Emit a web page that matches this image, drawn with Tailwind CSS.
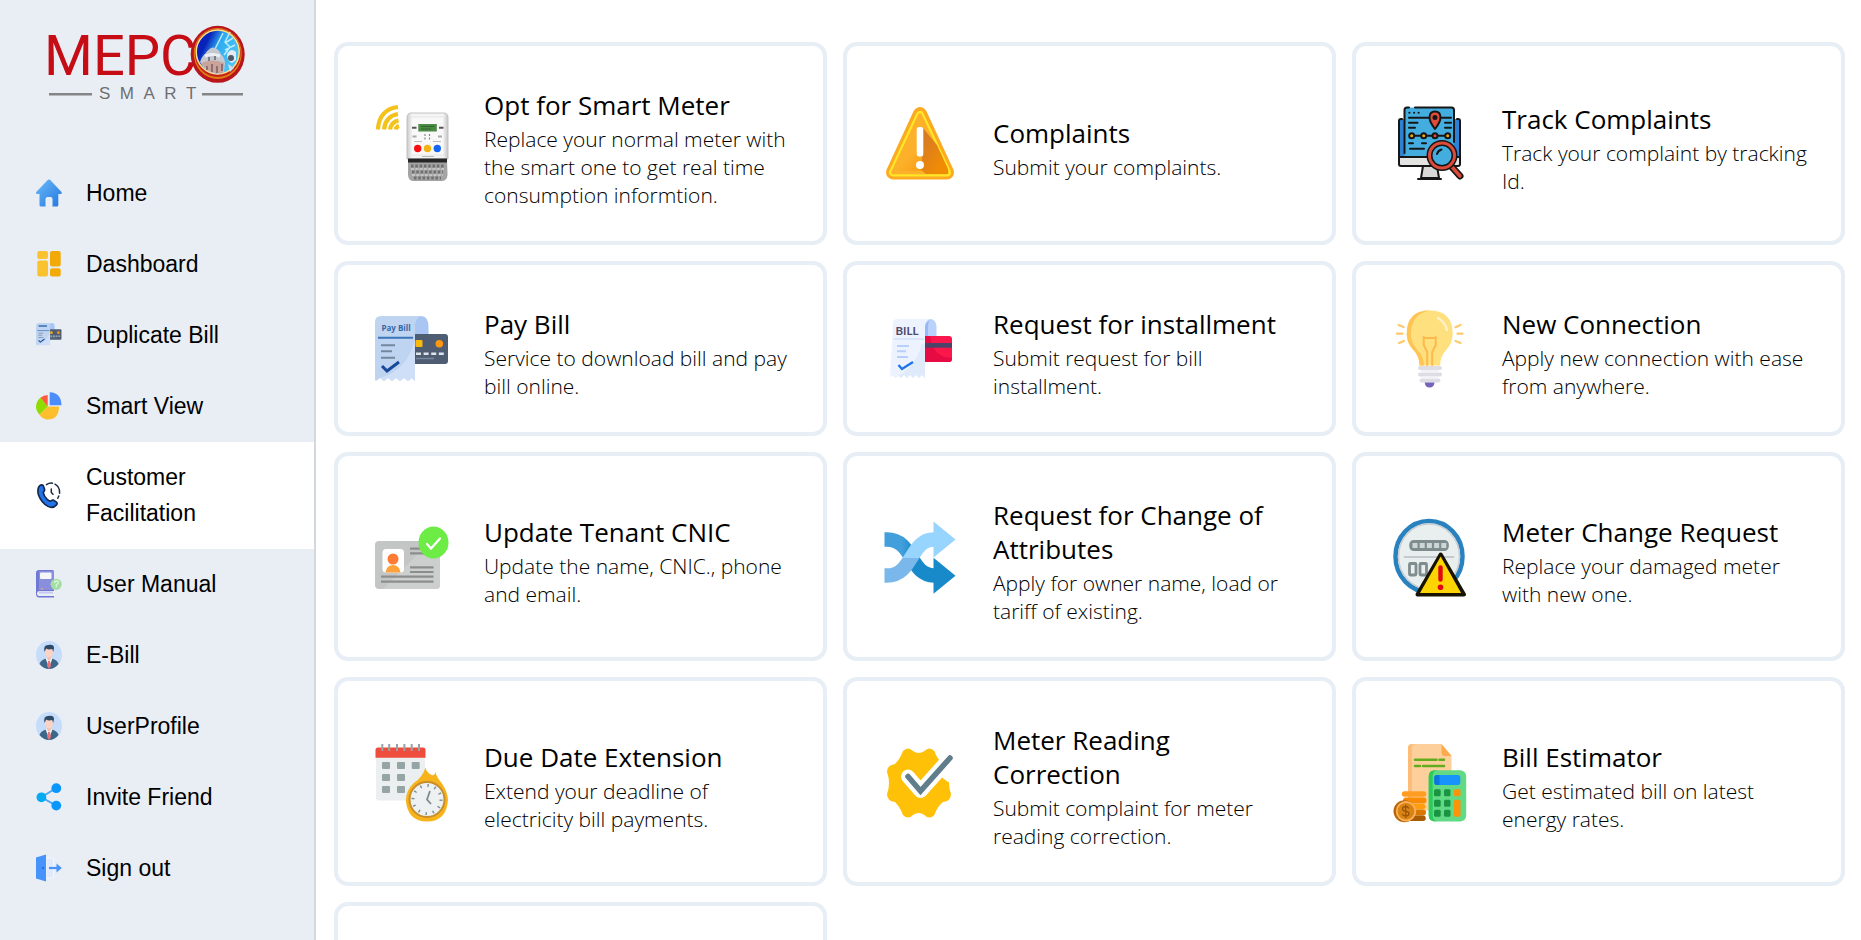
<!DOCTYPE html>
<html lang="en">
<head>
<meta charset="utf-8">
<meta name="viewport" content="width=device-width, initial-scale=1">
<title>MEPCO Smart</title>
<script src="https://cdn.jsdelivr.net/npm/@tailwindcss/browser@4"></script>
</head>
<body class="bg-white text-black">
<svg class="hidden" aria-hidden="true">
  <symbol id="paybill" viewBox="0 0 74 78">
    <path d="M34 6h12q7 0 7.500 10v12H40z" fill="#a8c5f3"/>
    <path d="M46 6q-6 1-6 10v12h-3V6z" fill="#90b2ee"/>
    <rect x="36" y="24" width="37" height="30" rx="3" fill="#4f5d73"/>
    <path d="M0 12q0-6 6-6h40q-6 2-6 12v53l-3-3-4 3-4-3-4 3-4-3-4 3-4-3-4 3-4-3-4 3-3-3-2 3z" fill="#bfd4f1"/>
    <path d="M40 29v42l-3-3-4 3-4-3-4 3-4-3-4 3-4-3-4 3-4-3q28-8 35-39z" fill="#cfdff8"/>
    <path d="M3 27.700h35" stroke="#3b74b9" stroke-width="2"/>
    <path d="M6 35.300h14M6 41.300h11M6 47.700h14" stroke="#76869f" stroke-width="2"/>
    <path d="M7 56l5 5 12-9" stroke="#174a9b" stroke-width="3" fill="none"/>
    <rect x="40.500" y="30" width="7" height="7" rx="1" fill="#fbb909"/>
    <circle cx="64.300" cy="33.700" r="3.800" fill="#ff9811"/>
    <path d="M41 43.700h28" stroke="#dfe4ea" stroke-width="2.500" stroke-dasharray="5 2.600"/>
    <path d="M41 48.500h18" stroke="#7a869b" stroke-width="1.500"/>
  </symbol>
  <symbol id="avatar" viewBox="0 0 26 28">
    <ellipse cx="13" cy="14" rx="13" ry="14" fill="#c5dcfb"/>
    <path d="M3.500 23q1-4 6.500-5.500h6q5.500 1.500 6.500 5.500-4 5-9.500 5t-9.500-5z" fill="#3d6788"/>
    <path d="M9.500 17l3.500 10 3.500-10z" fill="#f5f7fa"/>
    <path d="M12 20h2l1 5-2 3-2-3z" fill="#e8747c"/>
    <path d="M11 13h4v5l-2 2-2-2z" fill="#f5bfae"/>
    <ellipse cx="13" cy="11" rx="4" ry="5.500" fill="#fbd3c4"/>
    <path d="M8.500 11Q7 4 12 4q6-1 6 3l-.8 4-1-3q-4 1-6-.5z" fill="#2d4b66"/>
  </symbol>
</svg>

<div class="flex h-screen overflow-hidden">
  <aside class="w-[316px] shrink-0 border-r-2 border-[#d3d8df] bg-[#e9eef5] font-['Liberation_Sans',Arial,sans-serif]">
    <a href="#" class="block pt-[25px] pl-[49px]">
      <svg class="block overflow-visible" width="196" height="75" viewBox="0 0 196 75" role="img" aria-label="MEPCO Smart">
        <defs>
          <linearGradient id="sky" x1="0" x2="1" y1="0" y2=".5"><stop offset=".3" stop-color="#0822bb"/><stop offset=".55" stop-color="#2eaaf0"/><stop offset="1" stop-color="#4cc6f6"/></linearGradient>
        </defs>
        <text x="-5" y="50" font-family="Roboto, Liberation Sans, sans-serif" font-size="56" fill="#c60c14">MEPC</text>
        <ellipse cx="168.700" cy="29.300" rx="27" ry="28.500" fill="#b9151c"/>
        <ellipse cx="168.700" cy="28.500" rx="24" ry="25.500" fill="#e2810f"/>
        <ellipse cx="168.700" cy="28" rx="23" ry="24" fill="#c4231b"/>
        <ellipse cx="168.700" cy="27" rx="21.500" ry="22" fill="url(#sky)" stroke="#ffe08a" stroke-width="1.500"/>
        <path d="M174 8l-8 16M181 7l-5 10 5 5-6 8M184 13l-8 5M186 20l-10 5" stroke="#b9ecff" stroke-width="1.500" fill="none"/>
        <path d="M151 37q2-6 5-8 4-6 8-6.500 6 1 8 7 3 2 4 8l-1 10-6 2q-12-1-18-12.500z" fill="#c6c8cf"/>
        <path d="M156 31q7-3 15 0" stroke="#edf0f3" stroke-width="3" fill="none"/>
        <path d="M152 38q12-5 23 0l-1 10q-14 2-22-10z" fill="#caa49b"/>
        <path d="M158 41v4M163 39v8M168 41v7M173 39v7" stroke="#8f6e75" stroke-width="2"/>
        <path d="M160 32v4M166 31v4" stroke="#777d8f" stroke-width="2"/>
        <path d="M178 29q4-7 9-2v8l-4 3q-5-2-5-9z" fill="#e3eaf0"/>
        <ellipse cx="182" cy="33" rx="3" ry="3" fill="#4d5965"/>
        <path d="M179 39l6 4-4 4z" fill="#d5dde6"/>
        <path d="M0 69.300h43M153 69.300h41" stroke="#858585" stroke-width="2.500"/>
        <text x="50" y="74" font-family="Liberation Sans, Arial, sans-serif" font-size="17" fill="#6f6f6f">S&#160;&#160;M&#160;&#160;A&#160;&#160;R&#160;&#160;T</text>
      </svg>
    </a>
    <nav class="pt-[58px] text-[23px] leading-9" aria-label="Main">
      <a href="#" class="flex items-center gap-6 pt-[17px] pr-8 pb-[18px] pl-9">
        <svg class="h-7 w-[26px] shrink-0" viewBox="0 0 26 28" aria-hidden="true"><defs><linearGradient id="hg" x1="0" y1="0" x2="1" y2="1"><stop stop-color="#6cbcf9"/><stop offset="1" stop-color="#2176e0"/></linearGradient></defs><path d="M12 .8q1-.8 2 0L25.500 13q.8 2-1 2h-2.200v11q0 1.500-1.500 1.500h-4.300V20q0-2-2-2h-3q-2 0-2 2v7.500H5q-1.500 0-1.500-1.500V15H1.200q-1.800 0-1-2z" fill="url(#hg)"/></svg>
        <span>Home</span></a>
      <a href="#" class="flex items-center gap-6 pt-[17px] pr-8 pb-[18px] pl-9">
        <svg class="h-7 w-[26px] shrink-0" viewBox="0 0 26 28" aria-hidden="true"><g fill="#f9c22e"><rect x="1.300" y="1" width="10.700" height="8" rx="2"/><rect x="1.300" y="10.500" width="10.700" height="16" rx="2"/></g><g fill="#f2aa08"><rect x="14" y="1" width="10.700" height="15.500" rx="2"/><rect x="14" y="18.300" width="10.700" height="8.200" rx="2"/></g></svg>
        <span>Dashboard</span></a>
      <a href="#" class="flex items-center gap-6 pt-[17px] pr-8 pb-[18px] pl-9">
        <svg class="h-7 w-[26px] shrink-0" viewBox="0 0 26 28" aria-hidden="true"><use href="#paybill" width="26" height="27"/><path d="M2.500 5h8.500" stroke="#5b86c4" stroke-width="2"/></svg>
        <span>Duplicate Bill</span></a>
      <a href="#" class="flex items-center gap-6 pt-[17px] pr-8 pb-[18px] pl-9">
        <svg class="h-7 w-[26px] shrink-0" viewBox="0 0 26 28" aria-hidden="true"><path d="M11.700 14.500L3.600 22.700Q0 18.500 0 15q0-5.500 4.500-9.500z" fill="#90dc00"/><path d="M11.700 14.500L4.500 5.700Q7.500 3.200 11.700 3z" fill="#fd5a3e"/><path d="M11.700 14.500H23q0 13-11.300 13-5 0-8.200-4.800z" fill="#fdbf2d"/><path d="M13.700 13.300V.3q11.500.5 11.800 13z" fill="#4d8dfb"/></svg>
        <span>Smart View</span></a>
      <a href="#" aria-current="page" class="flex items-center gap-6 bg-white pt-[17px] pr-8 pb-[18px] pl-9">
        <svg class="h-7 w-[26px] shrink-0" viewBox="0 0 26 28" fill="none" stroke-linecap="round" stroke-linejoin="round" aria-hidden="true"><path d="M3 5.500Q5 3 7.200 4.500L8.500 8q.6 1.800-1.300 3.300.5 3.500 4 7 2 1.500 3.300 2 1.500-1.700 3-1.200l3 2q1.200 1.300 0 2.800-3.500 4-8.500 1.500Q5.500 22 2.500 14 1 8.500 3 5.500z" fill="#2173e8" stroke="#122447" stroke-width="1.600"/><path d="M10.500 3.600q3-2 6-1.400M19 3.200q5 2.800 4.600 9M22.800 15l-1 2.200" stroke="#1c2a44" stroke-width="1.500"/><path d="M15.300 8v3.500l1.700 1.700" stroke="#1c2a44" stroke-width="1.500"/></svg>
        <span>Customer Facilitation</span></a>
      <a href="#" class="flex items-center gap-6 pt-[17px] pr-8 pb-[18px] pl-9">
        <svg class="h-7 w-[26px] shrink-0" viewBox="0 0 26 28" aria-hidden="true"><path d="M3 0h13.500q1.500 0 1.500 1.500V21H3q-2 0-2 2.500T3 26h15v1.500H3q-3 0-3-4V3q0-3 3-3z" fill="#7079d2"/><path d="M3 1h15v19H3z" fill="#8a8fdd"/><rect x="4" y="2.500" width="11.500" height="6.500" rx="1" fill="#f5f5fc"/><path d="M3 22.500h14" stroke="#c5c8f2" stroke-width="2"/><path d="M4.500 19.500l1.500-2 1.500 2z" fill="#e8a77a"/><circle cx="20.200" cy="14.300" r="5.600" fill="#a3dfa4"/><path d="M18.500 13q0-2 2-2t1.800 1.800q-.3 1.200-2 1.700v3" stroke="#d9f5d5" stroke-width="1.300" fill="none"/></svg>
        <span>User Manual</span></a>
      <a href="#" class="flex items-center gap-6 pt-[17px] pr-8 pb-[18px] pl-9">
        <svg class="h-7 w-[26px] shrink-0" viewBox="0 0 26 28" aria-hidden="true"><use href="#avatar"/></svg>
        <span>E-Bill</span></a>
      <a href="#" class="flex items-center gap-6 pt-[17px] pr-8 pb-[18px] pl-9">
        <svg class="h-7 w-[26px] shrink-0" viewBox="0 0 26 28" aria-hidden="true"><use href="#avatar"/></svg>
        <span>UserProfile</span></a>
      <a href="#" class="flex items-center gap-6 pt-[17px] pr-8 pb-[18px] pl-9">
        <svg class="h-7 w-[26px] shrink-0" viewBox="0 0 26 28" aria-hidden="true"><path d="M20.300 5L5.300 14.300l15 8.300" stroke="#4aa5f8" stroke-width="1.800" fill="none"/><circle cx="20.300" cy="5.200" r="4.900" fill="#0a97fc"/><circle cx="5.400" cy="14.300" r="4.900" fill="#04abf3"/><circle cx="20.300" cy="22.600" r="4.900" fill="#0a97fc"/></svg>
        <span>Invite Friend</span></a>
      <a href="#" class="flex items-center gap-6 pt-[17px] pr-8 pb-[18px] pl-9">
        <svg class="h-7 w-[26px] shrink-0" viewBox="0 0 26 28" aria-hidden="true"><path d="M10 4h7.500v20H10z" fill="#e2e9fb" stroke="#f1f5ff"/><path d="M0 3.500L10 .5v27l-10-3z" fill="#4593fb"/><circle cx="7" cy="14" r="1.200" fill="#2c6fe0"/><path d="M13 14h9" stroke="#4593fb" stroke-width="2.200"/><path d="M20.500 9.500L25.800 14l-5.300 4.500z" fill="#4593fb"/></svg>
        <span>Sign out</span></a>
    </nav>
  </aside>

  <main class="min-w-0 flex-1 overflow-hidden pt-[42px] pr-4 pl-[18px] font-['Open_Sans','Noto_Sans',sans-serif]">
    <div class="grid grid-cols-3 gap-4">

      <a href="#" class="flex items-center gap-[35px] rounded-[14px] border-4 border-[#e8eef5] py-8 pr-7 pl-[37px]">
        <svg class="h-[78px] w-[74px] shrink-0 overflow-visible" viewBox="0 0 74 78" aria-hidden="true">
          <defs><linearGradient id="mt" x1="0" x2="1"><stop stop-color="#c9c9c9"/><stop offset=".12" stop-color="#f4f4f4"/><stop offset=".88" stop-color="#f4f4f4"/><stop offset="1" stop-color="#c4c4c4"/></linearGradient></defs>
          <g fill="none" stroke="#f3c21b" stroke-width="4.200"><path d="M2.800 24.500Q4.500 4 23 2"/><path d="M9 24.500Q10.500 11 23 9"/><path d="M15 24.500Q16 17 23.500 15.500"/><path d="M20.800 24.500Q21 22 24 21"/></g>
          <path d="M36 8h33q4 0 4 5v41H32V13q0-5 4-5z" fill="url(#mt)" stroke="#c2c2c2"/>
          <path d="M36 12h33v38H36z" fill="#f8f8f8" stroke="#e2e2e2" stroke-width=".8"/>
          <path d="M33 54h39l.5 16q-.5 6-6 6h-28q-5 0-5.500-6z" fill="#a4a4a4"/>
          <path d="M33 53.500h39v4H33z" fill="#262626"/>
          <path d="M36 61h33M37 67h31M39 73h27" stroke="#707070" stroke-width="3" stroke-dasharray="2.500 1.800"/>
          <path d="M36 64h33M37 70h31" stroke="#cfcfcf" stroke-width="1.300" stroke-dasharray="3 1.300"/>
          <rect x="43.300" y="19" width="18.500" height="7.500" fill="#4a8a43"/><path d="M46 21.500h13M46 24h10" stroke="#2f6330"/>
          <path d="M37 22.700h4.500M64 22.700h4.500" stroke="#555" stroke-width="2"/><path d="M37.500 31.500h4M63 31.500h4" stroke="#a9a9a9" stroke-width="2"/>
          <path d="M50 29v7M54.500 29v7" stroke="#888" stroke-width="1.200" stroke-dasharray="2 1.500"/><path d="M39 36.500h8M58 36.500h8M47 51.500h12" stroke="#bbb"/>
          <circle cx="42.700" cy="43.500" r="3.700" fill="#f80e12"/><circle cx="52.500" cy="43.500" r="3.700" fill="#f3b312"/><circle cx="62.300" cy="43.500" r="3.700" fill="#1466f2"/>
        </svg>
        <div class="min-w-0 pt-[10px]"><h2 class="mb-[3px] text-[26px] leading-[34px]">Opt for Smart Meter</h2><p class="text-[21px] leading-7 font-light">Replace your normal meter with the smart one to get real time consumption informtion.</p></div>
      </a>

      <a href="#" class="flex items-center gap-[35px] rounded-[14px] border-4 border-[#e8eef5] py-8 pr-7 pl-[37px]">
        <svg class="h-[78px] w-[74px] shrink-0 overflow-visible" viewBox="0 0 74 78" aria-hidden="true">
          <defs><linearGradient id="wg" x1="0" x2="1" y1="0" y2="1"><stop stop-color="#ffb52e"/><stop offset=".5" stop-color="#fdb02a"/><stop offset="1" stop-color="#f38e00"/></linearGradient><linearGradient id="ws" x1="0" x2="1" y1="0" y2="1"><stop stop-color="#cf7431"/><stop offset=".8" stop-color="#f08c03"/></linearGradient></defs>
          <path d="M36 9L9 67.500h54z" fill="#fbaa21" stroke="#fbaa21" stroke-width="14" stroke-linejoin="round"/>
          <path d="M36 10L9 67.500h54z" fill="url(#wg)" stroke="#ffe627" stroke-width="8" stroke-linejoin="round"/>
          <path d="M36 10L9 67.500h54z" fill="url(#wg)" stroke="#fdb02a" stroke-width="3.500" stroke-linejoin="round"/>
          <path d="M39 23L53 40l11 24v5H42l-8-7 4-5z" fill="url(#ws)"/>
          <rect x="32.700" y="22" width="6.600" height="29.500" rx="2.500" fill="#fff"/><circle cx="36" cy="60" r="4" fill="#fff"/>
        </svg>
        <div class="min-w-0 pt-[10px]"><h2 class="mb-[3px] text-[26px] leading-[34px]">Complaints</h2><p class="text-[21px] leading-7 font-light">Submit your complaints.</p></div>
      </a>

      <a href="#" class="flex items-center gap-[35px] rounded-[14px] border-4 border-[#e8eef5] py-8 pr-7 pl-[37px]">
        <svg class="h-[78px] w-[74px] shrink-0 overflow-visible" viewBox="0 0 74 78" fill="none" stroke="#161616" stroke-width="2" stroke-linecap="round" stroke-linejoin="round" aria-hidden="true">
          <path d="M9 14h-1q-2 0-2 2v36h61V16q0-2-2-2h-1" fill="#2d82d8"/>
          <path d="M6 52h61v7q0 2-2 2H8q-2 0-2-2z" fill="#e4e4e2"/>
          <path d="M30 61h14l2 12H28z" fill="#d9d9d7"/><path d="M25 74h23"/>
          <path d="M11.500 52V5q0-2.500 2.500-2.500h44.500Q61 2.500 61 5v47z" fill="#44ade0" stroke="none"/>
          <path d="M11.500 48V5q0-2.500 2.500-2.500h2M22 2.500h36.500Q61 2.500 61 5v32"/><path d="M7 52h30"/>
          <path d="M16.300 7.800h.2M21 7.800h.2M25.500 7.800h.2M16 12.800h42M16 17.800h8.500M16 22.800h6M52 17.800h6M52 22.800h6M16 38.200h4M29 38.200h4M17 43.800h14M19 30.800h36"/>
          <path d="M42 24q-5.500-7-5.500-11.500 0-6 5.500-6t5.500 6Q47.500 17 42 24z" fill="#e24a3b"/><circle cx="42" cy="12.500" r="1.500" fill="#161616"/>
          <g fill="#f0a70c"><circle cx="18.700" cy="30.800" r="2.500"/><circle cx="30.700" cy="30.800" r="2.500"/><circle cx="54.700" cy="30.800" r="2.500"/></g><circle cx="42" cy="30.800" r="2.500" fill="#e24a3b"/>
          <path d="M58 61l9 10" stroke-width="7"/><path d="M59 62l8 9" stroke="#dc4a38" stroke-width="3.500"/>
          <circle cx="49" cy="50.500" r="12.500" fill="#44ade0" stroke-width="6"/><circle cx="49" cy="50.500" r="12.500" stroke="#dc4a38" stroke-width="3"/><path d="M44 49q1-3.500 4.500-4.500"/>
        </svg>
        <div class="min-w-0 pt-[10px]"><h2 class="mb-[3px] text-[26px] leading-[34px]">Track Complaints</h2><p class="text-[21px] leading-7 font-light">Track your complaint by tracking Id.</p></div>
      </a>

      <a href="#" class="flex items-center gap-[35px] rounded-[14px] border-4 border-[#e8eef5] py-8 pr-7 pl-[37px]">
        <svg class="h-[78px] w-[74px] shrink-0 overflow-visible" viewBox="0 0 74 78" aria-hidden="true"><use href="#paybill"/><text x="6.500" y="20.500" font-family="Open Sans, sans-serif" font-size="8" font-weight="700" fill="#3567ab">Pay Bill</text></svg>
        <div class="min-w-0 pt-[10px]"><h2 class="mb-[3px] text-[26px] leading-[34px]">Pay Bill</h2><p class="text-[21px] leading-7 font-light">Service to download bill and pay bill online.</p></div>
      </a>

      <a href="#" class="flex items-center gap-[35px] rounded-[14px] border-4 border-[#e8eef5] py-8 pr-7 pl-[37px]">
        <svg class="h-[78px] w-[74px] shrink-0 overflow-visible" viewBox="0 0 74 78" aria-hidden="true">
          <path d="M38 9h8q6 0 6.500 8v12H38z" fill="#b9d1fb"/><path d="M47 9q-3 2-3 8v10h-3V14z" fill="#97b8f6"/>
          <rect x="37" y="26" width="31" height="26" rx="3" fill="#fb164c"/><path d="M41 26h5q2 16 14 21l8 1q0 4-3 4H41z" fill="#e70b43"/><path d="M41 33h27v4.700H41z" fill="#4b4468"/>
          <path d="M9 13q0-4 4-4h33q-5 2-5 8v51l-3-3-3 3-3-3-3 3-3-3-3 3-3-3-3 3-3-3-3 3-3-3-2 3z" fill="#edf3fe"/>
          <path d="M41 34v34l-3-3-3 3-3-3-3 3-3-3-3 3-3-3-3 3-3-3-3 3q20-10 27-34z" fill="#dfeafb"/>
          <text x="11.500" y="25.300" font-family="Lato, sans-serif" font-size="11.500" font-weight="700" fill="#52496f">BILL</text>
          <path d="M10 29h30" stroke="#d4e1f7" stroke-width="1.500"/><path d="M13 36h12M13 41.300h9M13 47h11" stroke="#b5d0fa" stroke-width="2"/>
          <path d="M14.500 55l3.500 4 11-7" stroke="#1f74ea" stroke-width="2.400" fill="none"/>
        </svg>
        <div class="min-w-0 pt-[10px]"><h2 class="mb-[3px] text-[26px] leading-[34px]">Request for installment</h2><p class="text-[21px] leading-7 font-light">Submit request for bill installment.</p></div>
      </a>

      <a href="#" class="flex items-center gap-[35px] rounded-[14px] border-4 border-[#e8eef5] py-8 pr-7 pl-[37px]">
        <svg class="h-[78px] w-[74px] shrink-0 overflow-visible" viewBox="0 0 74 78" fill="none" aria-hidden="true">
          <path d="M36.700.5q23 0 23 23.500 0 9-6.500 16-6 6-6 15.500H26.500Q26.500 46 20 39.500 13.700 33 13.700 24 13.700.5 36.700.5z" fill="#ffe07f"/>
          <path d="M36.700.5Q18 4 18 24q0 9 6.500 16 6.500 7 6.500 15.500h-4.500Q26.500 46 20 39.500 13.700 33 13.700 24 13.700.5 36.700.5z" fill="#fec454"/>
          <path d="M30.700 28h12M30.700 27v8l3.500 7v13M42.700 27v8l-3.500 7v13" stroke="#fdb94b" stroke-width="2" stroke-linecap="round"/>
          <path d="M45 8q7 4 9 12" stroke="#fff2c9" stroke-width="2.500" stroke-linecap="round"/>
          <path d="M5.500 15l5 2M4 23.700h5.500M6 33l5-2M62.500 17.300l5-2.300M64.500 23.700h5M62.500 31l5 2" stroke="#fdc96a" stroke-width="2.200" stroke-linecap="round"/>
          <path d="M27 58h20M27 64.500h20M28.500 70.500h17" stroke="#dedde6" stroke-width="4" stroke-linecap="round"/><path d="M28 61.300h18M29 67.500h16" stroke="#f2f1f6" stroke-width="2.500"/>
          <path d="M31.700 72.500h9.800q-.5 5-4.900 5t-4.900-5z" fill="#7462bd"/>
        </svg>
        <div class="min-w-0 pt-[10px]"><h2 class="mb-[3px] text-[26px] leading-[34px]">New Connection</h2><p class="text-[21px] leading-7 font-light">Apply new connection with ease from anywhere.</p></div>
      </a>

      <a href="#" class="flex items-center gap-[35px] rounded-[14px] border-4 border-[#e8eef5] py-8 pr-7 pl-[37px]">
        <svg class="h-[78px] w-[74px] shrink-0 overflow-visible" viewBox="0 0 74 78" fill="none" aria-hidden="true">
          <rect x="0" y="23" width="65" height="48" rx="4" fill="#c3c6c5"/><path d="M8 71L56 23h5q4 0 4 4v40q0 4-4 4z" fill="#cccfce"/>
          <rect x="7.500" y="31" width="21.500" height="23.500" rx="3.500" fill="#fff"/><circle cx="18" cy="41" r="5.500" fill="#ff7a33"/><path d="M10.500 54.500Q11.500 47 18 47t7.500 7.500z" fill="#fda23b"/>
          <path d="M35 30.700h23M35 35.300h23M35 49.300h23.500M35 54h23.500M6 58.700h52.500M6 63.700h52.500" stroke="#8b8e8d" stroke-width="2.200"/>
          <ellipse cx="58.500" cy="24.500" rx="15" ry="16" fill="#6cec45"/><path d="M52 26l4 4.500 9-10" stroke="#fff" stroke-width="2.300" stroke-linecap="round"/>
        </svg>
        <div class="min-w-0 pt-[10px]"><h2 class="mb-[3px] text-[26px] leading-[34px]">Update Tenant CNIC</h2><p class="text-[21px] leading-7 font-light">Update the name, CNIC., phone and email.</p></div>
      </a>

      <a href="#" class="flex items-center gap-[35px] rounded-[14px] border-4 border-[#e8eef5] py-8 pr-7 pl-[37px]">
        <svg class="h-[78px] w-[74px] shrink-0 overflow-visible" viewBox="0 0 74 78" fill="none" aria-hidden="true">
          <defs><linearGradient id="dn" x1="0" x2="1"><stop offset=".35" stop-color="#429fdc"/><stop offset=".6" stop-color="#188aca"/></linearGradient><linearGradient id="up" x1="0" x2="0" y1="1" y2="0"><stop offset=".5" stop-color="#7ab8ec"/><stop offset=".5" stop-color="#97d4fe"/></linearGradient></defs>
          <path d="M.5 21.500H3C29 21.500 26 57.500 50 57.500" stroke="url(#dn)" stroke-width="14.300"/><path d="M49.500 39.700v36l22-18z" fill="#188aca"/>
          <path d="M.5 57.500H3C29 57.500 26 21.500 50 21.500" stroke="url(#up)" stroke-width="14.300"/><path d="M49.500 3.500v36l22-18z" fill="#97d4fe"/>
        </svg>
        <div class="min-w-0 pt-[10px]"><h2 class="mb-[3px] text-[26px] leading-[34px]">Request for Change of Attributes</h2><p class="text-[21px] leading-7 font-light">Apply for owner name, load or tariff of existing.</p></div>
      </a>

      <a href="#" class="flex items-center gap-[35px] rounded-[14px] border-4 border-[#e8eef5] py-8 pr-7 pl-[37px]">
        <svg class="h-[78px] w-[74px] shrink-0 overflow-visible" viewBox="0 0 74 78" fill="none" aria-hidden="true">
          <ellipse cx="36" cy="38.500" rx="33.500" ry="35.500" fill="#e9eeef" stroke="#2982c0" stroke-width="4.500"/><ellipse cx="36" cy="38.500" rx="30.500" ry="32.500" stroke="#c8ced2" stroke-width="1.500"/>
          <rect x="17.300" y="23" width="37.500" height="9" rx="3.500" fill="#7f8c8d" stroke="#7f8c8d" stroke-width="2"/><path d="M19.500 27.500h34" stroke="#cfd6d7" stroke-width="5" stroke-dasharray="5 2.200"/>
          <path d="M10.700 39h50.600" stroke="#b7bfc3" stroke-width="1.500"/>
          <rect x="16.500" y="45.500" width="6.500" height="11.500" rx="1" stroke="#7f8c8d" stroke-width="2.800"/><rect x="27" y="45.500" width="6.500" height="11.500" rx="1" stroke="#7f8c8d" stroke-width="2.800"/>
          <path d="M47.700 36.500L24.500 76.500h46.500z" fill="#fed402" stroke="#171300" stroke-width="4" stroke-linejoin="round"/><path d="M47.700 38.500L27 75h41z" fill="#fed402"/>
          <path d="M47.500 49.500v12" stroke="#e30613" stroke-width="4.400" stroke-linecap="round"/><circle cx="47.500" cy="69.300" r="2.800" fill="#e30613"/>
        </svg>
        <div class="min-w-0 pt-[10px]"><h2 class="mb-[3px] text-[26px] leading-[34px]">Meter Change Request</h2><p class="text-[21px] leading-7 font-light">Replace your damaged meter with new one.</p></div>
      </a>

      <a href="#" class="flex items-center gap-[35px] rounded-[14px] border-4 border-[#e8eef5] py-8 pr-7 pl-[37px]">
        <svg class="h-[78px] w-[74px] shrink-0 overflow-visible" viewBox="0 0 74 78" fill="none" aria-hidden="true">
          <path d="M1 14h49v43.500H3q-2 0-2-2z" fill="#ebeff0"/><path d="M.5 7q0-2.500 2.500-2.500h45q2.500 0 2.500 2.500v7.700H.5z" fill="#ee4c3c"/>
          <path d="M7.300 1v7M14.200 1v7M22 1v7M29.400 1v7M36.700 1v7M44 1v7" stroke="#95a5a5" stroke-width="2"/>
          <g fill="#95a5a5"><rect x="7" y="19" width="8" height="7" rx="1"/><rect x="22" y="19" width="8" height="7" rx="1"/><rect x="36.700" y="19" width="8" height="7" rx="1"/><rect x="7" y="31" width="8" height="7" rx="1"/><rect x="22" y="31" width="8" height="7" rx="1"/><rect x="7" y="43" width="8" height="7" rx="1"/><rect x="22" y="43" width="8" height="7" rx="1"/></g>
          <path d="M50.500 24.500q1 5 6 7.500 3 1 4-3 1 5 6 11 6 8 6.500 17-1.500 21.500-21 21.500T30.800 57q.5-10 8-17 9-6 11.700-15.500z" fill="#f6b31a"/>
          <circle cx="52" cy="56.500" r="17.500" fill="#edf1f2" stroke="#c98d2e" stroke-width="2"/>
          <circle cx="52" cy="56.500" r="14" stroke="#7f8c8d" stroke-width="3" stroke-dasharray="1.400 5.930"/>
          <path d="M55 48l-3 8.500 4 4.500" stroke="#7f8c8d" stroke-width="1.800"/>
        </svg>
        <div class="min-w-0 pt-[10px]"><h2 class="mb-[3px] text-[26px] leading-[34px]">Due Date Extension</h2><p class="text-[21px] leading-7 font-light">Extend your deadline of electricity bill payments.</p></div>
      </a>

      <a href="#" class="flex items-center gap-[35px] rounded-[14px] border-4 border-[#e8eef5] py-8 pr-7 pl-[37px]">
        <svg class="h-[78px] w-[74px] shrink-0 overflow-visible" viewBox="0 0 74 78" fill="none" aria-hidden="true">
          <path d="M19 8Q24 3 29 8q5.700 4 11.400 0 5-5 10 0Q53 16 59 21q8 1 8 8-4 11 0 22 0 7-8 8-6 5-8.600 13-5 5-10 0-5.700-4-11.400 0-5 5-10 0Q16 64 11 59q-8-1-8-8 4-11 0-22 0-7 8-8Q16 16 19 8z" fill="#fec107"/>
          <path d="M57 16l15-13v34l-8 2-8-6z" fill="#fff"/>
          <path d="M24 33.500l12.500 14.500L66 15" stroke="#fff" stroke-width="14" stroke-linecap="round" stroke-linejoin="round"/><path d="M24 33.500l12.500 14.500L66 15" stroke="#607d8b" stroke-width="5.500" stroke-linecap="round"/>
        </svg>
        <div class="min-w-0 pt-[10px]"><h2 class="mb-[3px] text-[26px] leading-[34px]">Meter Reading Correction</h2><p class="text-[21px] leading-7 font-light">Submit complaint for meter reading correction.</p></div>
      </a>

      <a href="#" class="flex items-center gap-[35px] rounded-[14px] border-4 border-[#e8eef5] py-8 pr-7 pl-[37px]">
        <svg class="h-[78px] w-[74px] shrink-0 overflow-visible" viewBox="0 0 74 78" fill="none" aria-hidden="true">
          <path d="M19 1h29.500L58.500 13v54.500H15V5q0-4 4-4z" fill="#fdd09b"/><path d="M19 1h4q-4 0-4 4v62.500h-4V5q0-4 4-4z" fill="#fdbd78"/><path d="M48.500 1l10 12H52q-3.500 0-3.500-4z" fill="#fcab4c"/>
          <path d="M22 16.700h21.500M46.500 16.700H51M22 23h5M30 23h21" stroke="#62ac1d" stroke-width="2.500" stroke-linecap="round"/>
          <path d="M11.500 51h19" stroke="#ff9d22" stroke-width="5.500" stroke-linecap="round"/><path d="M13 57.500h17.500" stroke="#f98c05" stroke-width="6" stroke-linecap="round"/><path d="M13 63.500h17" stroke="#ff9d0d" stroke-width="5" stroke-linecap="round"/><path d="M17 69.500h13" stroke="#d97800" stroke-width="6" stroke-linecap="round"/><path d="M17 75.300h13" stroke="#a85d05" stroke-width="5.500" stroke-linecap="round"/>
          <circle cx="11.500" cy="68.300" r="11" fill="#b96409"/><circle cx="13" cy="68.300" r="9.300" fill="#dc8413" stroke="#fbb35b" stroke-width="1.800"/>
          <path d="M16 65.500q-1-2-3.500-2-3 .2-3 2.400 0 1.800 3 2.300 3.500.5 3.500 2.600t-3.200 2.200q-2.800 0-3.600-2M12.700 61.500v13.500" stroke="#9a560c" stroke-width="1.300"/>
          <rect x="35.700" y="27.300" width="37.500" height="51.200" rx="6" fill="#62d985"/><path d="M41.700 27.300h3q-5 0-5 6v39q0 6 5 6h-3q-6 0-6-6v-39q0-6 6-6z" fill="#2bcb5b"/>
          <rect x="41.300" y="32" width="26" height="10" rx="2.500" fill="#1893fb"/><path d="M44 32h2.500v10H44q-2.700 0-2.700-2.500v-5Q41.300 32 44 32z" fill="#0a76dc"/>
          <g fill="#1a9443"><rect x="41" y="46.300" width="6.700" height="7" rx="1.500"/><rect x="51" y="46.300" width="6.500" height="7" rx="1.500"/><rect x="41" y="56.700" width="6.700" height="7" rx="1.500"/><rect x="51" y="56.700" width="6.500" height="7" rx="1.500"/><rect x="41" y="66.700" width="6.700" height="7" rx="1.500"/><rect x="51" y="66.700" width="6.500" height="7" rx="1.500"/></g>
          <g fill="#fd9308"><rect x="61" y="46.300" width="6.500" height="7" rx="1.500"/><rect x="61" y="56.700" width="6.500" height="17" rx="1.500"/></g>
        </svg>
        <div class="min-w-0 pt-[10px]"><h2 class="mb-[3px] text-[26px] leading-[34px]">Bill Estimator</h2><p class="text-[21px] leading-7 font-light">Get estimated bill on latest energy rates.</p></div>
      </a>

      <div class="min-h-44 rounded-[14px] border-4 border-[#e8eef5]"></div>
    </div>
  </main>
</div>
</body>
</html>
